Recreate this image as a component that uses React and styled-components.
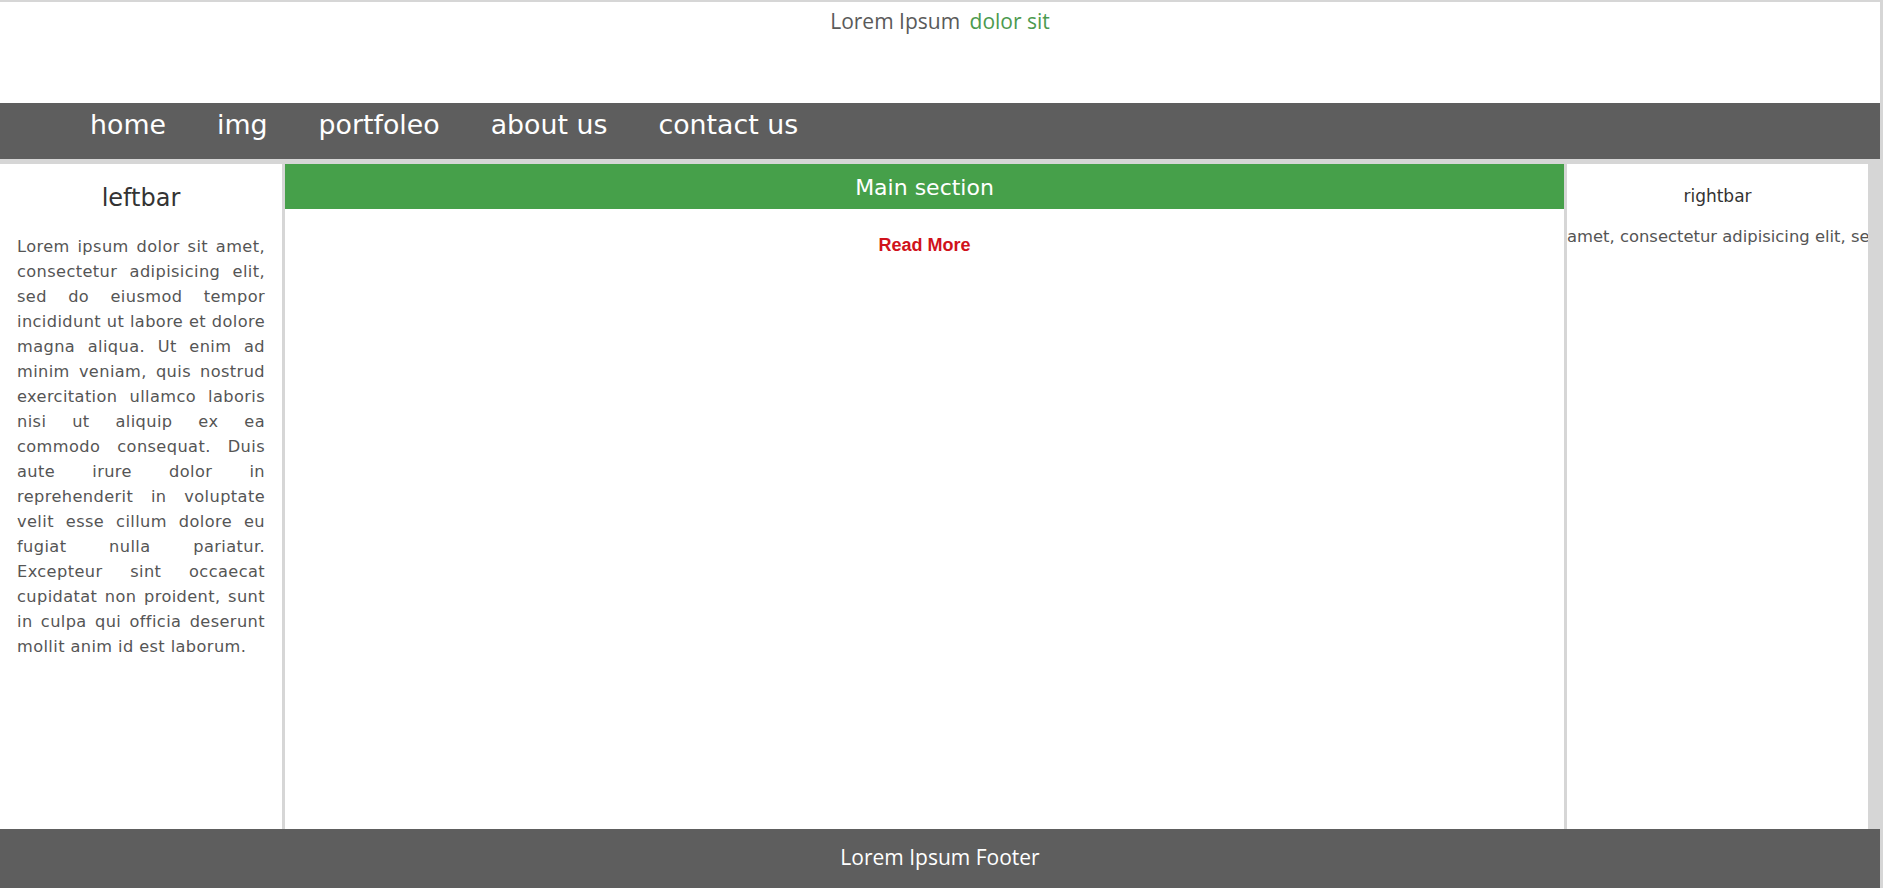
import styled, { createGlobalStyle } from "styled-components";

const GlobalStyle = createGlobalStyle`
    html, body {
        margin: 0;
        padding: 0;
        background: #d6d6d6;
    }

    body {
        font-family: "DejaVu Sans", Verdana, sans-serif;
        overflow: hidden;
    }
`

const navItems = ["home", "img", "portfoleo", "about us", "contact us"];

const leftText =
    "Lorem ipsum dolor sit amet, consectetur adipisicing elit, sed do eiusmod tempor incididunt ut labore et dolore magna aliqua. Ut enim ad minim veniam, quis nostrud exercitation ullamco laboris nisi ut aliquip ex ea commodo consequat. Duis aute irure dolor in reprehenderit in voluptate velit esse cillum dolore eu fugiat nulla pariatur. Excepteur sint occaecat cupidatat non proident, sunt in culpa qui officia deserunt mollit anim id est laborum.";

const App = () => {
    return (
        <>
            <GlobalStyle />
            <Page>
                <Header>
                    <Brand>
                        Lorem Ipsum <BrandAccent>dolor sit</BrandAccent>
                    </Brand>
                </Header>

                <Nav>
                    <NavList>
                        {navItems.map((item) => (
                            <NavItem key={item}>{item}</NavItem>
                        ))}
                    </NavList>
                </Nav>

                <Columns>
                    <LeftBar>
                        <SideTitle>leftbar</SideTitle>
                        <SideText>{leftText}</SideText>
                    </LeftBar>

                    <MainSection>
                        <MainTitle>Main section</MainTitle>
                        <ReadMore href="#">Read More</ReadMore>
                    </MainSection>

                    <RightBar>
                        <RightTitle>rightbar</RightTitle>
                        <Marquee>
                            amet, consectetur adipisicing elit, sed do eiusmod tempor incididunt
                        </Marquee>
                    </RightBar>
                </Columns>

                <Footer>Lorem Ipsum Footer</Footer>
            </Page>
        </>
    );
};

export default App;

const Page = styled.div`
    width: 1880px;
    padding-top: 2px;
    display: flex;
    flex-direction: column;
    height: 886px;
`

const Header = styled.header`
    height: 101px;
    background: #ffffff;
    display: flex;
    justify-content: center;
`

const Brand = styled.div`
    font-family: "Open Sans", "Noto Sans", sans-serif;
    font-size: 21px;
    color: #5a5a5a;
    padding-top: 5px;
    white-space: pre;
`

const BrandAccent = styled.span`
    color: #4c9a4f;
    margin-left: 4px;
`

const Nav = styled.nav`
    height: 56px;
    background: #5e5e5e;
`

const NavList = styled.ul`
    margin: 0;
    padding: 2px 0 0 90px;
    list-style: none;
    display: flex;
    gap: 51px;
`

const NavItem = styled.li`
    font-family: "DejaVu Sans", Verdana, sans-serif;
    font-size: 26.8px;
    line-height: 40px;
    color: #ffffff;
`

const Columns = styled.div`
    flex: 1;
    margin-top: 5px;
    display: flex;
    gap: 3px;
    min-height: 0;
`

const Column = styled.section`
    background: #ffffff;
    overflow: hidden;
`

const LeftBar = styled(Column)`
    width: 282px;
    padding: 0 17px;
    box-sizing: border-box;
`

const SideTitle = styled.h2`
    margin: 20px 0 0;
    font-size: 24px;
    font-weight: normal;
    line-height: 28px;
    color: #333333;
    text-align: center;
`

const SideText = styled.p`
    margin: 22px 0 0;
    font-size: 16.2px;
    letter-spacing: 0.4px;
    line-height: 25px;
    color: #555555;
    text-align: justify;
`

const MainSection = styled(Column)`
    width: 1279px;
    display: flex;
    flex-direction: column;
    align-items: center;
`

const MainTitle = styled.h1`
    margin: 0;
    width: 100%;
    height: 45px;
    box-sizing: border-box;
    padding-top: 2px;
    background: #46a04a;
    color: #ffffff;
    font-size: 22px;
    font-weight: normal;
    line-height: 43px;
    text-align: center;
`

const ReadMore = styled.a`
    margin-top: 26px;
    font-family: "Liberation Sans", Arial, sans-serif;
    font-size: 18px;
    font-weight: bold;
    color: #d0121b;
    text-decoration: none;
`

const RightBar = styled(Column)`
    width: 301px;
`

const RightTitle = styled.h3`
    margin: 22px 0 0;
    font-size: 17px;
    font-weight: normal;
    line-height: 20px;
    color: #333333;
    text-align: center;
`

const Marquee = styled.div`
    margin-top: 21px;
    font-size: 16.4px;
    line-height: 20px;
    color: #555555;
    white-space: nowrap;
`

const Footer = styled.footer`
    height: 59px;
    background: #5e5e5e;
    color: #ffffff;
    font-family: "Open Sans", "Noto Sans", sans-serif;
    font-size: 21px;
    line-height: 56px;
    text-align: center;
`
